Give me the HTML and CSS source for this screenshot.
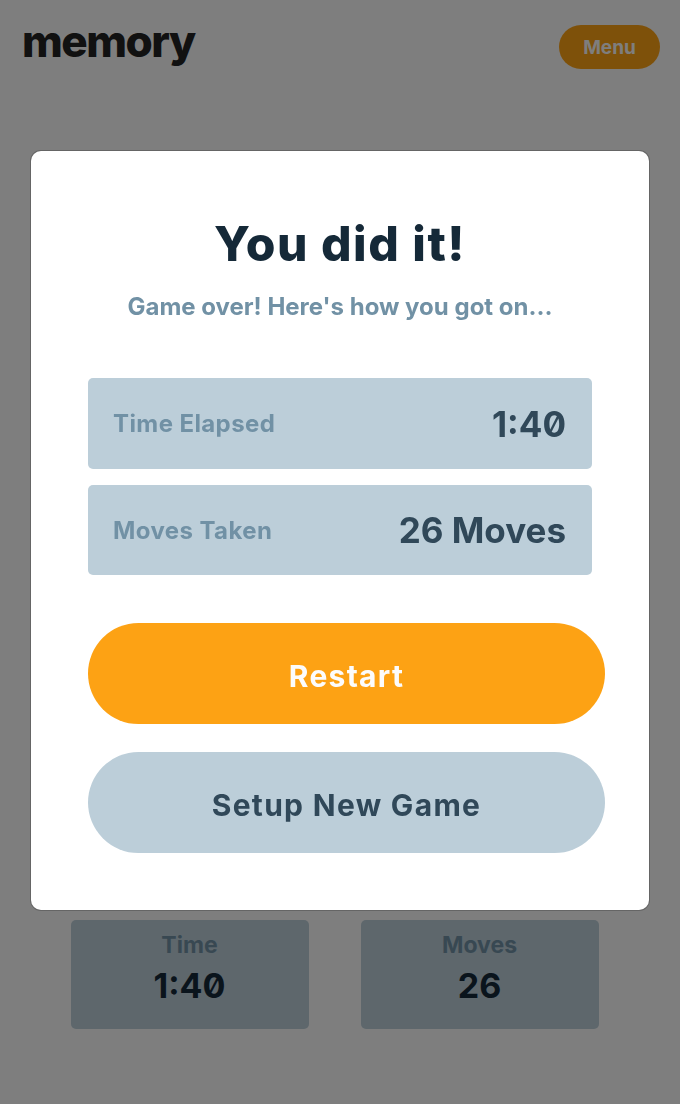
FILE: index.html
```html
<!DOCTYPE html>
<html lang="en">
<head>
<meta charset="utf-8">
<title>memory</title>
<link rel="stylesheet" href="styles.css">
</head>
<body>
<div class="page">
  <header class="topbar">
    <h1 class="logo">memory</h1>
    <button class="menu-btn">Menu</button>
  </header>
  <main class="board"></main>
  <footer class="scores">
    <div class="score-card">
      <span class="score-label">Time</span>
      <span class="score-value">1:40</span>
    </div>
    <div class="score-card">
      <span class="score-label">Moves</span>
      <span class="score-value">26</span>
    </div>
  </footer>
</div>

<div class="overlay">
  <section class="modal">
    <h2 class="modal-title">You did it!</h2>
    <p class="modal-sub">Game over! Here's how you got on…</p>
    <div class="results">
      <div class="result-row">
        <span class="result-label">Time Elapsed</span>
        <span class="result-value">1:40</span>
      </div>
      <div class="result-row">
        <span class="result-label">Moves Taken</span>
        <span class="result-value">26 Moves</span>
      </div>
    </div>
    <div class="actions">
      <button class="btn btn-primary">Restart</button>
      <button class="btn btn-secondary">Setup New Game</button>
    </div>
  </section>
</div>
</body>
</html>
```

FILE: styles.css
```css
* { box-sizing: border-box; }

html, body {
  margin: 0;
  padding: 0;
}

body {
  background: #fcfcfc;
  font-family: Inter, "Noto Sans", "Liberation Sans", sans-serif;
  font-weight: 700;
  font-feature-settings: "zero" 1;
  color: #152938;
}

.page {
  min-height: 1104px;
  display: flex;
  flex-direction: column;
}

.topbar {
  display: flex;
  justify-content: space-between;
  align-items: flex-start;
  padding: 25px 20px 0 22px;
}

.logo {
  margin: 0;
  font-size: 44px;
  line-height: 32px;
  font-weight: 800;
  letter-spacing: -1.5px;
  color: #222;
}

.menu-btn {
  width: 101px;
  height: 44px;
  border: 0;
  border-radius: 22px;
  background: #fda214;
  color: #fcfcfc;
  font-family: inherit;
  font-weight: 700;
  font-size: 19px;
  padding: 0;
}

.board {
  flex: 1;
}

.scores {
  display: flex;
  justify-content: center;
  gap: 52px;
  padding: 0 11px 75px 0;
}

.score-card {
  width: 238px;
  height: 109px;
  border-radius: 5px;
  background: #bcced9;
  display: flex;
  flex-direction: column;
  align-items: center;
  padding-top: 11px;
}

.score-label {
  font-size: 23px;
  line-height: 28px;
  color: #7191a5;
}

.score-value {
  margin-top: 7px;
  font-size: 34px;
  line-height: 40px;
  color: #152938;
}

.overlay {
  position: fixed;
  inset: 0;
  background: rgba(0, 0, 0, 0.5);
  padding: 151px 31px 0;
}

.modal {
  background: #ffffff;
  border-radius: 10px;
  height: 759px;
  padding: 64px 57px 0;
  display: flex;
  flex-direction: column;
  align-items: stretch;
  box-shadow: 0 0 0 1px rgba(0, 0, 0, 0.2);
}

.modal-title {
  margin: 0;
  text-align: center;
  font-size: 48px;
  line-height: 58px;
  font-weight: 800;
  letter-spacing: 1.5px;
  color: #152938;
}

.modal-sub {
  margin: 22px 0 0;
  text-align: center;
  font-size: 24px;
  line-height: 24px;
  color: #7191a5;
}

.results {
  margin-top: 59px;
  display: flex;
  flex-direction: column;
  gap: 16px;
}

.result-row {
  height: 91px;
  border-radius: 5px;
  background: #bcced9;
  display: flex;
  justify-content: space-between;
  align-items: center;
  padding: 0 26px 0 25px;
}

.result-row + .result-row {
  height: 90px;
}

.result-label {
  font-size: 24px;
  letter-spacing: 0.4px;
  color: #7191a5;
}

.result-value {
  font-size: 35px;
  color: #304859;
}

.actions {
  margin-top: 48px;
  margin-right: -13px;
  display: flex;
  flex-direction: column;
  gap: 28px;
}

.btn {
  height: 101px;
  border: 0;
  border-radius: 51px;
  font-family: inherit;
  font-weight: 700;
  font-size: 30px;
  letter-spacing: 1.3px;
  padding: 4px 0 0;
}

.btn-primary {
  background: #fda214;
  color: #fcfcfc;
}

.btn-secondary {
  background: #bcced9;
  color: #304859;
}
```
